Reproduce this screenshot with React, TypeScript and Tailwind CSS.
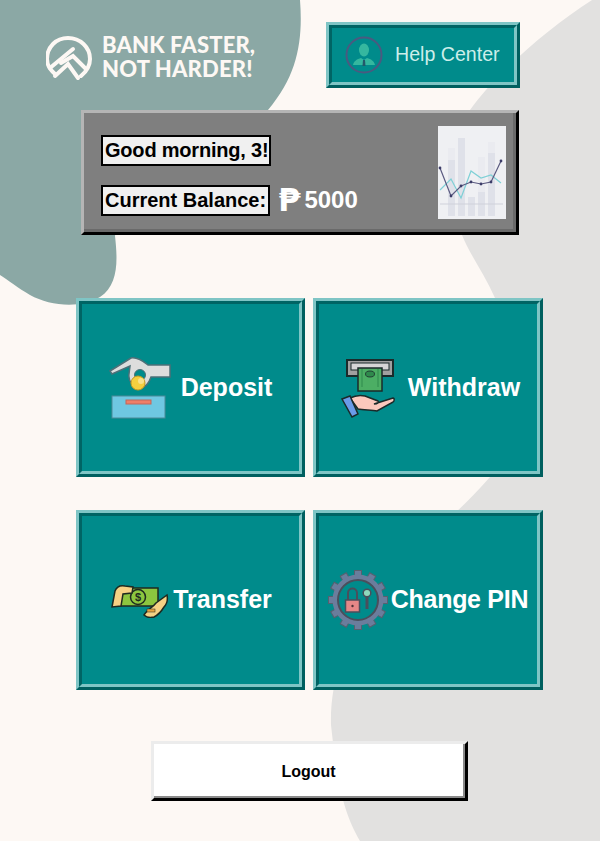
const SANS = "font-['Liberation_Sans',Arial,sans-serif]";

function Background() {
  return (
    <svg className="absolute inset-0" width="600" height="841" viewBox="0 0 600 841">
      <path d="M0 0H300C303 40 298 75 268 110C215 165 125 185 115 236C118 262 118 285 100 297C80 309 50 306 30 295C18 288 8 280 0 275Z" fill="#8ba8a5" />
      <path d="M592 0H600V841H360C345 815 338 790 331 725C330 680 345 640 372 595C395 555 440 535 490 477C512 445 512 360 495 298C485 275 470 255 462 235C458 190 462 130 470 110C495 75 545 30 592 0Z" fill="#e2e1e0" />
    </svg>
  );
}

function LogoMark() {
  return (
    <svg width="46" height="46" viewBox="0 0 46 46" fill="none" stroke="#fdf8f4" strokeWidth="4" strokeLinecap="round" className="mt-[4px]">
      <path d="M9 38C3 33 1 28 1 23C1 11 10 2 22 2C34 2 44 11 44 23C44 29 41 35 35 40" />
      <path d="M4 32L27 13" />
      <path d="M15 27L27 20L40 33" />
      <path d="M9 40L22 28L32 42" />
    </svg>
  );
}

function AgentIcon() {
  return (
    <svg width="38" height="38" viewBox="0 0 38 38">
      <circle cx="19" cy="19" r="17.5" fill="none" stroke="#4a5a80" strokeWidth="2" />
      <ellipse cx="19" cy="14" rx="5" ry="6.5" fill="#35b79f" />
      <path d="M8 29C9 25 12 23 16 22L19 24L22 22C26 23 29 25 30 29Z" fill="#35b79f" />
      <path d="M18 24H20L20.5 30H17.5Z" fill="#22596b" />
    </svg>
  );
}

function DepositIcon() {
  return (
    <svg width="62" height="64" viewBox="0 0 62 64" className="mt-[3px]">
      <path d="M1 14L22 1C28 0 34 4 39 8H61V20H42C40 26 36 30 32 31C24 31 19 24 20 17L21 9L3 17Z" fill="#dddddd" stroke="#4d7078" strokeWidth="1.5" />
      <circle cx="31" cy="18" r="5.5" fill="#008b8b" stroke="#4d7078" strokeWidth="1" />
      <circle cx="29" cy="26" r="7" fill="#f4cf3f" stroke="#c49a22" strokeWidth="1" />
      <circle cx="32" cy="24" r="3" fill="#f9e28a" />
      <rect x="3" y="39" width="53" height="22" fill="#6fc8e2" stroke="#4d8a98" strokeWidth="1" />
      <rect x="17" y="43" width="25" height="4" fill="#ef7f68" stroke="#c0675a" strokeWidth="1" />
    </svg>
  );
}

function WithdrawIcon() {
  return (
    <svg width="60" height="60" viewBox="0 0 60 60" stroke="#1b2a2a" strokeWidth="1.5">
      <rect x="11" y="2" width="46" height="16" fill="#a0a0a0" strokeWidth="2" />
      <rect x="15" y="5" width="38" height="7" fill="#d6d6d6" strokeWidth="1" />
      <rect x="22" y="10" width="24" height="23" fill="#4cae64" />
      <path d="M26 11V29M42 11V29" stroke="#2f8a4c" strokeWidth="1" />
      <ellipse cx="34" cy="16" rx="4.5" ry="3" fill="#2f8a4c" strokeWidth="0.8" />
      <path d="M14 40C20 37 25 37 29 38L42 43C43 44 42 46 38 46L57 40C59 40 58 44 57 44L41 53C36 52 28 52 22 51Z" fill="#fbc8bd" />
      <path d="M6 41L14 38L22 56L16 59Z" fill="#6a9be8" />
    </svg>
  );
}

function TransferIcon() {
  return (
    <svg width="60" height="36" viewBox="0 0 60 36" stroke="#1e2a20" strokeWidth="1.5">
      <rect x="10" y="6" width="39" height="18" fill="#8cc63f" />
      <circle cx="29" cy="15" r="7.5" fill="#8cc63f" />
      <text x="29" y="19" fontSize="11" fontWeight="700" textAnchor="middle" fill="#1e2a20" stroke="none" fontFamily="Liberation Sans">$</text>
      <path d="M3 25L6 9C8 4 11 3 16 4L24 5L23 11L14 12L12 24Z" fill="#f6d184" />
      <path d="M35 33C38 28 44 25 47 21L58 13C59 18 58 22 55 25C52 30 49 33 45 35C41 36 37 35 35 33Z" fill="#f6d184" />
      <rect x="38" y="27" width="8" height="3" fill="#e9a33f" strokeWidth="0.5" />
    </svg>
  );
}

function PinIcon() {
  const teeth = [0, 30, 60, 90, 120, 150, 180, 210, 240, 270, 300, 330];
  return (
    <svg width="60" height="60" viewBox="0 0 60 60">
      <g fill="#6b7d9c" stroke="#57606f" strokeWidth="1">
        {teeth.map((deg) => (
          <rect key={deg} x="26.5" y="0.5" width="7" height="7" transform={`rotate(${deg} 30 30)`} />
        ))}
      </g>
      <circle cx="30" cy="30" r="25.5" fill="#6b7d9c" />
      <circle cx="30" cy="30" r="20" fill="#008b8b" stroke="#4a4f5c" strokeWidth="2" />
      <path d="M20 30V23C20 17 29 17 29 23V30" fill="none" stroke="#4a4f5c" strokeWidth="2" />
      <rect x="17.5" y="30" width="14" height="12" fill="#e58787" stroke="#4a4f5c" strokeWidth="1.5" />
      <circle cx="24.5" cy="36" r="1.2" fill="#4d2f35" />
      <path d="M39 27V39" stroke="#4a4f5c" strokeWidth="3" />
      <circle cx="39" cy="23" r="3.8" fill="#8fd9bd" stroke="#4a4f5c" strokeWidth="1.5" />
    </svg>
  );
}

function MiniChart() {
  const bars = [[10, 34, 22], [20, 12, 12], [30, 71, 71], [40, 66, 31], [50, 27, 16]];
  const dark = [[2, 42], [13, 70], [23, 60], [33, 56], [43, 58], [53, 56], [63, 35]];
  return (
    <svg width="68" height="93" viewBox="0 0 68 93" className="shrink-0">
      <rect width="68" height="93" fill="#eff0f3" />
      {bars.map(([x, y, top]) => (
        <g key={x}>
          <rect x={x} y={top} width="7" height={90 - top} fill="#eaebf0" />
          <rect x={x} y={y} width="7" height={90 - y} fill="#dfe1e9" />
        </g>
      ))}
      <path d="M2 78H65" stroke="#cfd1da" strokeWidth="1" />
      <path d="M2 64L13 53L23 72L33 45L43 52L53 49L63 57" fill="none" stroke="#7fd0d6" strokeWidth="1.2" />
      <path d="M2 42L13 70L23 60L33 56L43 58L53 56L63 35" fill="none" stroke="#5a5a80" strokeWidth="1.2" />
      {dark.map(([cx, cy]) => (
        <circle key={cx} cx={cx} cy={cy} r="1.4" fill="#3c3c68" />
      ))}
    </svg>
  );
}

function ActionCard({ icon, label, gap, tracking = '' }: { icon: React.ReactNode; label: string; gap: string; tracking?: string }) {
  return (
    <button className="border-[3px] border-t-[#7fc5c5] border-l-[#7fc5c5] border-r-[#005f5f] border-b-[#005f5f] bg-[#008b8b]">
      <div className={`h-full border-[3px] border-t-[#006464] border-l-[#006464] border-r-[#7fc5c5] border-b-[#7fc5c5] flex items-center justify-center ${gap}`}>
        {icon}
        <span className={`${SANS} text-[25px] font-bold text-white whitespace-nowrap ${tracking}`}>{label}</span>
      </div>
    </button>
  );
}

export default function App() {
  return (
    <div className="relative w-[600px] h-[841px] overflow-hidden bg-[#fdf8f4]">
      <Background />
      <div className="relative">
        <div className="flex pt-[22px] pl-[46px]">
          <div className="flex items-center gap-[10px] w-[280px] h-[66px] pt-[4px]">
            <LogoMark />
            <div className="font-['Lato',sans-serif] font-black text-[22px] leading-[24px] tracking-[0.15px] text-[#fdf8f4] whitespace-nowrap">
              BANK FASTER,<br />NOT HARDER!
            </div>
          </div>
          <button className="w-[194px] h-[66px] border-[3px] border-t-[#7fc5c5] border-l-[#7fc5c5] border-r-[#005f5f] border-b-[#005f5f] bg-[#008b8b]">
            <div className="h-full border-[3px] border-t-[#006464] border-l-[#006464] border-r-[#7fc5c5] border-b-[#7fc5c5] flex items-center pl-[13px] gap-[12px]">
              <AgentIcon />
              <span className={`${SANS} text-[19.6px] text-[#cdeeea]`}>Help Center</span>
            </div>
          </button>
        </div>

        <div className="ml-[81px] mt-[22px] w-[438px] h-[125px] border-[3px] border-t-[#b5b5b5] border-l-[#b5b5b5] border-r-black border-b-black bg-[#7f7f7f]">
          <div className="h-full border-r-[3px] border-b-[3px] border-r-[#6a6a6a] border-b-[#6a6a6a] flex justify-between pl-[17px] pr-[7px] pt-[13px]">
            <div className={`${SANS} flex flex-col items-start gap-[18px] pt-[9px]`}>
              <div className="border-2 border-black bg-[#f0f0f0] w-[170px] pl-[2px] text-[20px] font-bold leading-[27px] tracking-[-0.2px] whitespace-nowrap text-black">Good morning, 3!</div>
              <div className="flex items-center gap-[8px]">
                <div className="border-2 border-black bg-[#f0f0f0] px-[2px] text-[20px] font-bold leading-[27px] text-black">Current Balance:</div>
                <span className="flex items-center text-white font-bold text-[24px] leading-none">
                  <span className="font-['DejaVu_Sans',sans-serif] text-[32px] leading-none mr-[4px]">₱</span>5000
                </span>
              </div>
            </div>
            <MiniChart />
          </div>
        </div>

        <div className="ml-[76px] mt-[63px] grid grid-cols-[229px_230px] grid-rows-[179px_180px] gap-x-[8px] gap-y-[33px]">
          <ActionCard icon={<DepositIcon />} label="Deposit" gap="gap-[10px]" />
          <ActionCard icon={<WithdrawIcon />} label="Withdraw" gap="gap-[12px]" />
          <ActionCard icon={<TransferIcon />} label="Transfer" gap="gap-[4px]" />
          <ActionCard icon={<PinIcon />} label="Change PIN" gap="gap-[3px]" tracking="tracking-[-0.3px]" />
        </div>

        <button className="ml-[151px] mt-[51px] block w-[317px] h-[60px] border-[3px] border-t-[#ececec] border-l-[#ececec] border-r-black border-b-black bg-white">
          <div className={`h-full border-r-2 border-b-2 border-r-[#8a8a8a] border-b-[#8a8a8a] flex items-center justify-center pt-[4px] ${SANS} text-[16px] font-bold text-black`}>
            Logout
          </div>
        </button>
      </div>
    </div>
  );
}
